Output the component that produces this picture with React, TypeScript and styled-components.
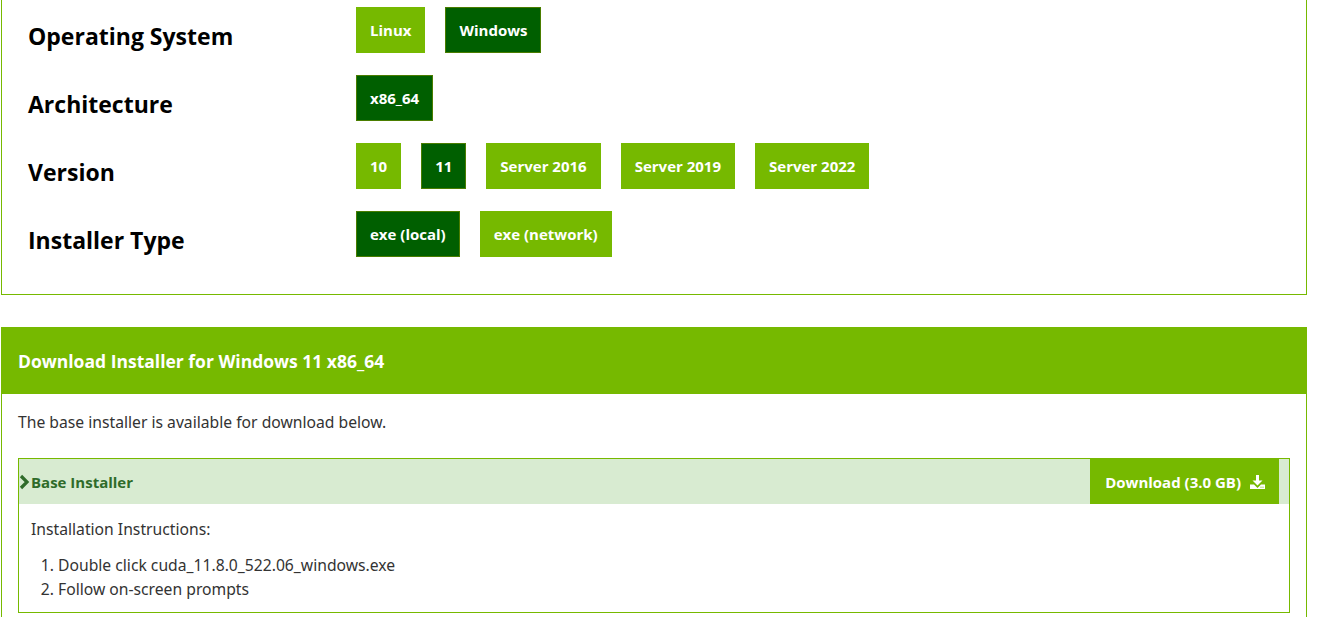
import React from "react";
import styled, { createGlobalStyle } from "styled-components";

const GlobalStyle = createGlobalStyle`
  html, body { margin: 0; padding: 0; background: #ffffff; }
  body { font-family: "Noto Sans", "Liberation Sans", sans-serif; color: #333333; }
  * { box-sizing: border-box; }
`;

const GREEN = "#76b900";
const DARK = "#005f00";
const BOLD_FONT = `"Open Sans", "Liberation Sans", sans-serif`;

const Page = styled.div`
  padding: 0 12px 40px 1px;
`;

const ConfigPanel = styled.section`
  margin-top: -20px;
  border: 1px solid ${GREEN};
  padding: 26px 26px 37px 26px;
  display: grid;
  grid-template-columns: 328px 1fr;
  row-gap: 22px;
`;

const Label = styled.div`
  font-family: ${BOLD_FONT};
  font-weight: 700;
  font-size: 23px;
  line-height: 26px;
  color: #000000;
  padding-top: 16px;
`;

const Options = styled.div`
  display: flex;
  gap: 20px;
`;

const OptionButton = styled.button<{ $selected?: boolean }>`
  height: 46px;
  padding: 0 13px;
  border: 1px solid ${(p) => (p.$selected ? "#4a7d00" : GREEN)};
  background: ${(p) => (p.$selected ? DARK : GREEN)};
  color: #ffffff;
  font-family: ${BOLD_FONT};
  font-weight: 700;
  font-size: 15px;
  cursor: pointer;
`;

const DownloadPanel = styled.section`
  margin-top: 32px;
  border: 1px solid ${GREEN};
  border-bottom: none;
`;

const PanelHeader = styled.h2`
  margin: -1px -1px 0 -1px;
  height: 67px;
  background: ${GREEN};
  color: #ffffff;
  display: flex;
  align-items: center;
  padding: 0 17px;
  font-family: ${BOLD_FONT};
  font-weight: 700;
  font-size: 17.5px;
`;

const PanelBody = styled.div`
  padding: 16px 16px 10px 16px;
`;

const Intro = styled.p`
  margin: 0 0 24px 0;
  font-size: 15.7px;
  line-height: 24px;
  color: #333333;
`;

const InstallerBox = styled.div`
  border: 1px solid ${GREEN};
`;

const InstallerHeader = styled.div`
  display: flex;
  align-items: center;
  justify-content: space-between;
  height: 45px;
  background: #d8ebd1;
  padding-right: 10px;
`;

const InstallerTitle = styled.div`
  display: flex;
  align-items: center;
  font-family: ${BOLD_FONT};
  font-weight: 700;
  font-size: 15px;
  color: #2f6b2a;
`;

const DownloadButton = styled.button`
  height: 45px;
  padding: 0 14px 0 15px;
  border: none;
  background: ${GREEN};
  color: #ffffff;
  display: flex;
  align-items: center;
  gap: 9px;
  font-family: ${BOLD_FONT};
  font-weight: 700;
  font-size: 15px;
  cursor: pointer;
`;

const InstallerBody = styled.div`
  padding: 13px 12px 11px 12px;
  font-size: 15.7px;
  line-height: 24px;
  color: #333333;
`;

const Steps = styled.ol`
  margin: 12px 0 0 0;
  padding-left: 27px;
`;

const Chevron = () => (
  <svg width="12" height="16" viewBox="0 0 12 16">
    <polyline points="2,2 8,8 2,14" fill="none" stroke="#2f6b2a" strokeWidth="3.2" />
  </svg>
);

const DownloadIcon = () => (
  <svg width="15" height="14" viewBox="0 0 15 14">
    <rect x="6" y="0" width="3" height="6" fill="#ffffff" />
    <polygon points="2.5,5.5 12.5,5.5 7.5,10.5" fill="#ffffff" />
    <path d="M0 9.5 H4 L7.5 13 L11 9.5 H15 V14 H0 Z" fill="#ffffff" />
    <rect x="10.5" y="11.7" width="1" height="1" fill={GREEN} />
    <rect x="12.5" y="11.7" width="1" height="1" fill={GREEN} />
  </svg>
);

const rows: { label: string; options: string[]; selected: string }[] = [
  { label: "Operating System", options: ["Linux", "Windows"], selected: "Windows" },
  { label: "Architecture", options: ["x86_64"], selected: "x86_64" },
  { label: "Version", options: ["10", "11", "Server 2016", "Server 2019", "Server 2022"], selected: "11" },
  { label: "Installer Type", options: ["exe (local)", "exe (network)"], selected: "exe (local)" },
];

export default function App() {
  return (
    <>
      <GlobalStyle />
      <Page>
        <ConfigPanel>
          {rows.map((r) => (
            <React.Fragment key={r.label}>
              <Label>{r.label}</Label>
              <Options>
                {r.options.map((o) => (
                  <OptionButton key={o} $selected={o === r.selected}>
                    {o}
                  </OptionButton>
                ))}
              </Options>
            </React.Fragment>
          ))}
        </ConfigPanel>
        <DownloadPanel>
          <PanelHeader>Download Installer for Windows 11 x86_64</PanelHeader>
          <PanelBody>
            <Intro>The base installer is available for download below.</Intro>
            <InstallerBox>
              <InstallerHeader>
                <InstallerTitle>
                  <Chevron />
                  Base Installer
                </InstallerTitle>
                <DownloadButton>
                  Download (3.0 GB)
                  <DownloadIcon />
                </DownloadButton>
              </InstallerHeader>
              <InstallerBody>
                Installation Instructions:
                <Steps>
                  <li>Double click cuda_11.8.0_522.06_windows.exe</li>
                  <li>Follow on-screen prompts</li>
                </Steps>
              </InstallerBody>
            </InstallerBox>
          </PanelBody>
        </DownloadPanel>
      </Page>
    </>
  );
}
